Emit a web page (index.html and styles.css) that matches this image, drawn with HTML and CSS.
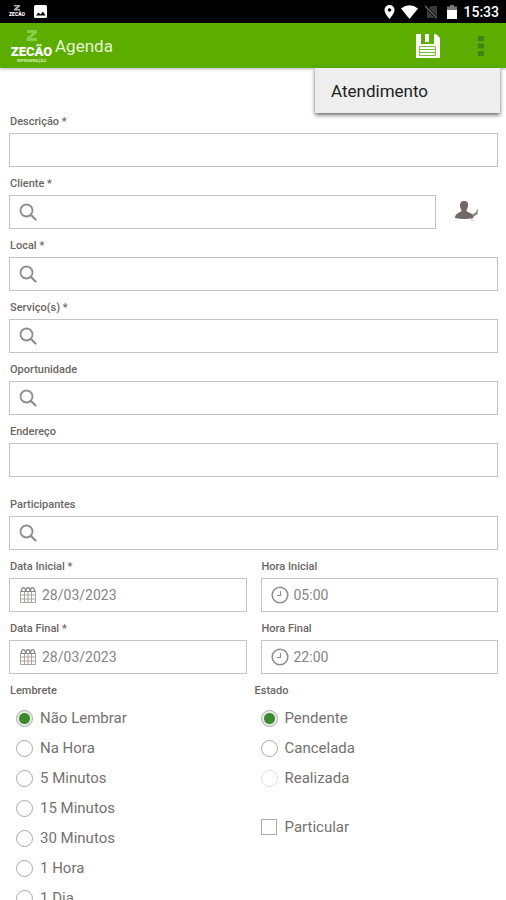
FILE: index.html
```html
<!DOCTYPE html>
<html lang="pt-BR">
<head>
  <meta charset="UTF-8">
  <meta name="viewport" content="width=device-width, initial-scale=1.0">
  <title>Agenda</title>
  <link rel="stylesheet" href="styles.css">
</head>
<body>
  <svg class="symbols" aria-hidden="true">
    <symbol id="search" viewBox="0 0 18 18">
      <circle cx="7.5" cy="7.5" r="6" fill="none" stroke="#8e8e8e" stroke-width="1.8"/>
      <path d="M12 12l4.5 4.5" stroke="#8e8e8e" stroke-width="2.2" stroke-linecap="round"/>
    </symbol>
    <symbol id="calendar" viewBox="0 0 18 18">
      <path d="M1.500 5v11.500h15V5M1.500 9h15M1.500 13h15M5.500 6v10M9 6v10M12.500 6v10" fill="none" stroke="#aaa5a2" stroke-width="1"/>
      <path d="M1.500 5.500h15M2.500 5c0-4.500 4-4.500 4 0M7 5c0-4.500 4-4.500 4 0M11.500 5c0-4.500 4-4.500 4 0" fill="none" stroke="#8a8481" stroke-width="1.200"/>
    </symbol>
    <symbol id="clock" viewBox="0 0 18 18">
      <circle cx="9" cy="9" r="7.8" fill="none" stroke="#8e8e8e" stroke-width="1.6"/>
      <path d="M9.5 5v4.5H6" fill="none" stroke="#8e8e8e" stroke-width="1.2"/>
    </symbol>
  </svg>

  <div class="screen">
    <div class="status-bar">
      <svg class="status-brand" viewBox="0 0 18 16">
        <path d="M6 1h6v1.500L9 5h3v1.500H6V5l3-2.500H6z" fill="#aaa"/>
        <text x="9" y="12" text-anchor="middle" class="status-name">ZECÃO</text>
      </svg>
      <svg width="13" height="13" viewBox="0 0 13 13">
        <rect width="13" height="13" rx="1.500" fill="#fff"/>
        <path d="M2 10.500l2.500-3 2 2 2.500-3 2.500 4z" fill="#000"/>
      </svg>
      <div class="status-right">
        <svg width="11" height="14" viewBox="0 0 11 14">
          <path d="M5.500 0a5 5 0 0 0-5 5c0 3.500 5 9 5 9s5-5.500 5-9a5 5 0 0 0-5-5z" fill="#fff"/>
          <circle cx="5.500" cy="5" r="1.800" fill="#000"/>
        </svg>
        <svg width="17" height="14" viewBox="0 0 17 14">
          <path d="M0 3.500Q8.500-3 17 3.500L8.500 14z" fill="#fff"/>
        </svg>
        <svg width="14" height="14" viewBox="0 0 14 14">
          <path d="M13 1v12H3V5l4-4z" fill="#3a3a3a"/>
          <path d="M1 1l12 12" stroke="#000" stroke-width="2.500"/>
          <path d="M1 1l12 12" stroke="#666" stroke-width="1.200"/>
        </svg>
        <svg class="battery" width="10" height="14" viewBox="0 0 10 14">
          <path d="M3 0h4v1.500h3V6H0V1.500h3z" fill="#777"/>
          <path d="M0 5h10v9H0z" fill="#fff"/>
        </svg>
        <span class="time">15:33</span>
      </div>
    </div>

    <header class="app-bar">
      <svg class="logo" viewBox="0 0 42 40">
        <path d="M16 4h10v3l-6 5h6v3H15.500v-3l6-5H16z" fill="#8ccc4b"/>
        <text x="20.500" y="30" text-anchor="middle" class="brand-name">ZECÃO</text>
        <text x="20.500" y="36" text-anchor="middle" class="brand-sub">REFRIGERAÇÃO</text>
      </svg>
      <h1>Agenda</h1>
      <button class="icon-btn save" type="button" aria-label="Salvar">
        <svg width="24" height="24" viewBox="0 0 24 24">
          <path d="M0 0h20l4 4v20H0z" fill="#fff"/>
          <path d="M5 0h4v8H5zM13 0h5v10H5V8h8z" fill="#5cad00"/>
          <path d="M3.500 12.500h16v9h-16zM3.500 15.500h16M3.500 18.500h16" fill="none" stroke="#7dbd38"/>
        </svg>
      </button>
      <button class="icon-btn more" type="button" aria-label="Mais opções">
        <svg width="6" height="22" viewBox="0 0 6 22">
          <path d="M0 1h6v5H0zM0 8.500h6v5H0zM0 16h6v5H0z" fill="#44801a"/>
        </svg>
      </button>
      <div class="menu">
        <button type="button">Atendimento</button>
      </div>
    </header>

    <form class="form">
      <div class="field">
        <label for="descricao">Descrição *</label>
        <div class="box"><input type="text" id="descricao"></div>
      </div>
      <div class="field">
        <label for="cliente">Cliente *</label>
        <div class="with-action">
          <div class="box"><svg class="icon"><use href="#search"/></svg><input type="text" id="cliente"></div>
          <button class="icon-btn" type="button" aria-label="Editar cliente">
            <svg width="24" height="24" viewBox="0 0 24 24">
              <path d="M9 1c3.500 0 4.500 2 4 5-.3 2-1 3-1.500 4.500 0 2 6 2.500 7 5V18Q9 20 0 18c0-5.500 6.500-5.500 6.500-7.500C6 9 5.300 8 5 6c-.3-3 1-5 4-5z" fill="#716763"/>
              <path d="M23 8.500l-3 4.500-3 1 1.500 2.500 4-2z" fill="#918b89"/>
              <path d="M16 18l1.500 3" stroke="#aaa"/>
            </svg>
          </button>
        </div>
      </div>
      <div class="field">
        <label for="local">Local *</label>
        <div class="box"><svg class="icon"><use href="#search"/></svg><input type="text" id="local"></div>
      </div>
      <div class="field">
        <label for="servicos">Serviço(s) *</label>
        <div class="box"><svg class="icon"><use href="#search"/></svg><input type="text" id="servicos"></div>
      </div>
      <div class="field">
        <label for="oportunidade">Oportunidade</label>
        <div class="box"><svg class="icon"><use href="#search"/></svg><input type="text" id="oportunidade"></div>
      </div>
      <div class="field last-of-group">
        <label for="endereco">Endereço</label>
        <div class="box"><input type="text" id="endereco"></div>
      </div>
      <div class="field">
        <label for="participantes">Participantes</label>
        <div class="box"><svg class="icon"><use href="#search"/></svg><input type="text" id="participantes"></div>
      </div>
      <div class="row">
        <div class="field">
          <label for="dataInicial">Data Inicial *</label>
          <div class="box"><svg class="icon"><use href="#calendar"/></svg><input type="text" id="dataInicial" value="28/03/2023"></div>
        </div>
        <div class="field">
          <label for="horaInicial">Hora Inicial</label>
          <div class="box"><svg class="icon"><use href="#clock"/></svg><input type="text" id="horaInicial" value="05:00"></div>
        </div>
      </div>
      <div class="row">
        <div class="field">
          <label for="dataFinal">Data Final *</label>
          <div class="box"><svg class="icon"><use href="#calendar"/></svg><input type="text" id="dataFinal" value="28/03/2023"></div>
        </div>
        <div class="field">
          <label for="horaFinal">Hora Final</label>
          <div class="box"><svg class="icon"><use href="#clock"/></svg><input type="text" id="horaFinal" value="22:00"></div>
        </div>
      </div>

      <div class="options">
        <fieldset>
          <legend>Lembrete</legend>
          <label class="option"><input type="radio" name="lembrete" checked>Não Lembrar</label>
          <label class="option"><input type="radio" name="lembrete">Na Hora</label>
          <label class="option"><input type="radio" name="lembrete">5 Minutos</label>
          <label class="option"><input type="radio" name="lembrete">15 Minutos</label>
          <label class="option"><input type="radio" name="lembrete">30 Minutos</label>
          <label class="option"><input type="radio" name="lembrete">1 Hora</label>
          <label class="option"><input type="radio" name="lembrete">1 Dia</label>
        </fieldset>
        <fieldset>
          <legend>Estado</legend>
          <label class="option"><input type="radio" name="estado" checked>Pendente</label>
          <label class="option"><input type="radio" name="estado">Cancelada</label>
          <label class="option"><input type="radio" name="estado" disabled>Realizada</label>
          <label class="option private"><input type="checkbox" name="particular">Particular</label>
        </fieldset>
      </div>
    </form>
  </div>
</body>
</html>
```
FILE: styles.css
```css
* { box-sizing: border-box; }
body { margin: 0; background: #fff; font-family: Roboto, Arial, sans-serif; color: #767170; }
button, input { font: inherit; color: inherit; }
button { border: 0; background: none; padding: 0; cursor: pointer; }
.symbols { position: absolute; width: 0; height: 0; }
.screen { height: 100vh; overflow: hidden; }

.status-bar { height: 23px; padding: 0 7px 0 8px; background: #000; display: flex; align-items: center; gap: 8px; }
.status-brand { width: 18px; height: 16px; }
.status-name { font-size: 5px; font-weight: 900; fill: #fff; }
.status-right { margin-left: auto; display: flex; align-items: center; gap: 6px; }
.battery { margin-left: 3px; }
.time { color: #fff; font-size: 14px; font-weight: 500; line-height: 22px; }

.app-bar { position: relative; height: 45px; padding: 0 22px 0 11px; background: #5cad00; display: flex; align-items: center; box-shadow: 0 1px 3px rgba(0,0,0,0.3); }
.logo { width: 42px; height: 40px; margin-right: 2px; }
.brand-name { font-size: 13px; font-weight: 900; fill: #fff; }
.brand-sub { font-size: 4px; font-weight: 700; fill: #d6efb8; }
.app-bar h1 { margin: 0; flex: 1; color: #e4f5d2; font-size: 17px; font-weight: 400; line-height: 24px; }
.icon-btn { display: flex; align-items: center; justify-content: center; }
.save { margin-right: 38px; }
.menu { position: absolute; top: 100%; right: 6px; width: 185px; background: #eee; box-shadow: 0 2px 4px rgba(0,0,0,0.6); }
.menu button { width: 100%; height: 45px; padding: 0 16px; text-align: left; font-size: 17px; color: #222; }

.form { padding: 47px 8px 0 9px; }
.field { margin-bottom: 10px; }
.field > label, legend { display: block; padding: 0 1px; margin-bottom: 4px; font-size: 11px; font-weight: 500; line-height: 14px; color: #6b6664; }
.last-of-group { margin-bottom: 21px; }
.box { display: flex; align-items: center; gap: 5px; height: 34px; padding: 0 9px; border: 1px solid #c4c4c4; }
.box .icon { width: 18px; height: 18px; flex: none; }
.box input { flex: 1; min-width: 0; border: 0; padding: 0; outline: 0; background: none; font-size: 14px; color: #858585; }
.with-action { display: flex; align-items: center; }
.with-action .box { flex: 1; }
.with-action .icon-btn { width: 62px; }
.row { display: flex; gap: 14px; }
.row .field { flex: 1; }

.options { display: grid; grid-template-columns: 1fr 1fr; }
fieldset { border: 0; margin: 0; padding: 0; min-width: 0; }
legend { margin-bottom: 5px; }
.option { display: flex; align-items: center; gap: 7px; height: 30px; padding-left: 7px; font-size: 15px; }
.option input { appearance: none; width: 17px; height: 17px; margin: 0; border: 1px solid #aaa; background: #fff; }
.option input[type="radio"] { border-radius: 50%; }
.option input[type="radio"]:checked { background: radial-gradient(circle, #3f8a2c 5px, #e6eee3 6px); }
.option input:disabled { border-color: #ddd; }
.option input[type="checkbox"] { width: 16px; height: 16px; margin-right: 1px; }
.private { margin-top: 19px; }
```
